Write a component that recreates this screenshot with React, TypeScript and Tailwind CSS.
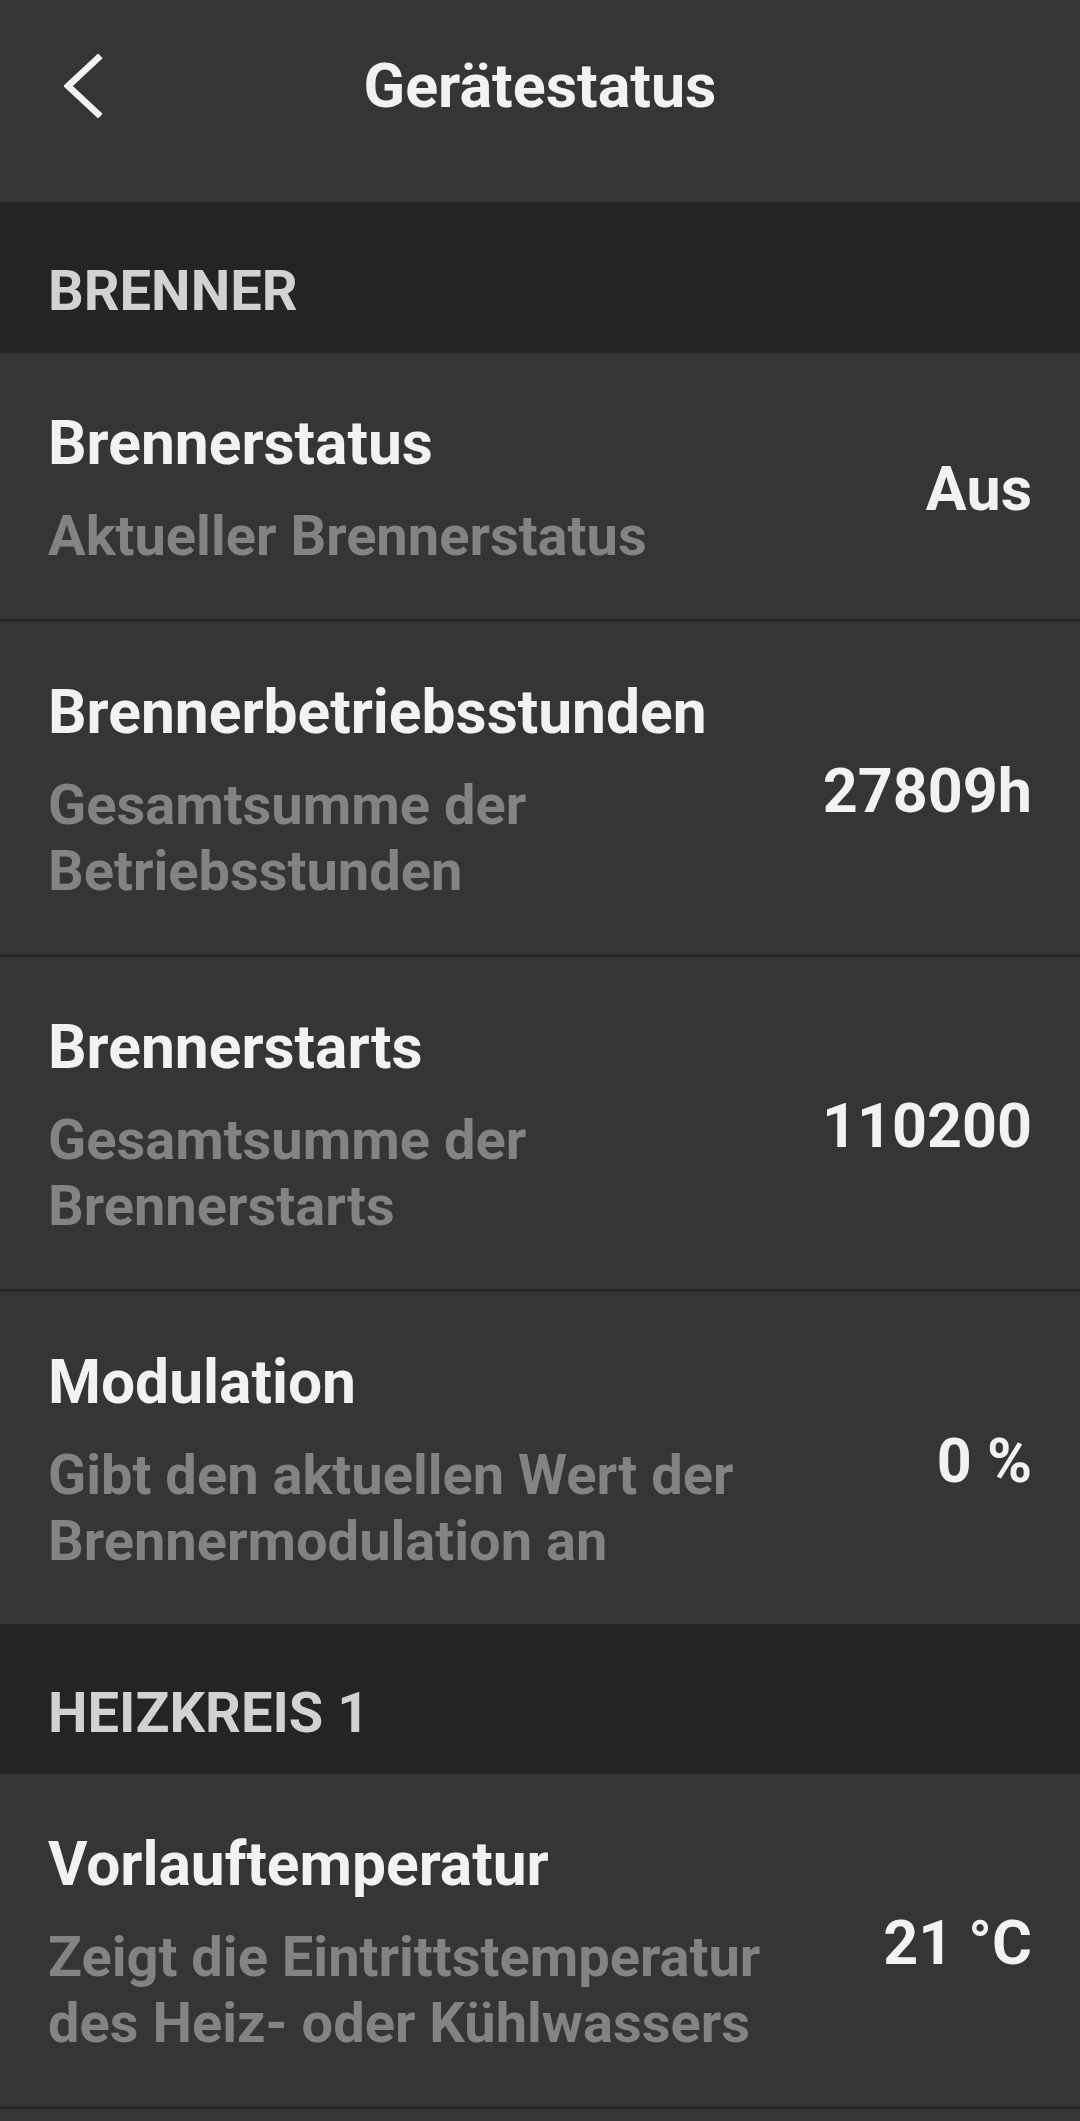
import React from "react";

type Row = { title: string; sub: string; value: string };

const brenner: Row[] = [
  { title: "Brennerstatus", sub: "Aktueller Brennerstatus", value: "Aus" },
  { title: "Brennerbetriebsstunden", sub: "Gesamtsumme der Betriebsstunden", value: "27809h" },
  { title: "Brennerstarts", sub: "Gesamtsumme der Brennerstarts", value: "110200" },
  { title: "Modulation", sub: "Gibt den aktuellen Wert der Brennermodulation an", value: "0 %" },
];

const heizkreis: Row[] = [
  {
    title: "Vorlauftemperatur",
    sub: "Zeigt die Eintrittstemperatur des Heiz- oder Kühlwassers",
    value: "21 °C",
  },
];

function SectionHeader({ label, h }: { label: string; h: "a" | "b" }) {
  return (
    <div className={(h === "a" ? "h-[151px]" : "h-[150px]") + " bg-[#242424] pl-[48px] pt-[57px]"}>
      <div className="text-[56px] leading-[64px] font-bold text-[#d2d2d2]">{label}</div>
    </div>
  );
}

function ItemRow({ row, divider }: { row: Row; divider: boolean }) {
  return (
    <div
      className={
        "flex items-center gap-[60px] bg-[#353535] pl-[48px] pr-[48px] pt-[56px] pb-[50px] " +
        (divider ? "border-t-[3px] border-[#262626]" : "")
      }
    >
      <div className="flex min-w-0 flex-1 flex-col">
        <div className="text-[60.5px] leading-[70px] font-bold text-[#f2f2f2]">{row.title}</div>
        <div className="mt-[24px] text-[56px] leading-[66px] font-bold text-[#838383]">{row.sub}</div>
      </div>
      <div className="shrink-0 text-[61px] leading-[70px] font-bold text-[#f2f2f2]">{row.value}</div>
    </div>
  );
}

export default function App() {
  return (
    <div
      className="w-[1080px] bg-[#353535]"
      style={{ fontFamily: "Roboto, 'Noto Sans', sans-serif" }}
    >
      <div className="h-[202px] bg-[#353535]">
        <div className="grid h-[172px] grid-cols-[1fr_auto_1fr] items-center">
          <div className="pl-[64px]">
            <svg width="40" height="64" viewBox="0 0 40 64" fill="none">
              <polyline
                points="34,4 4,32 34,60"
                stroke="#f2f2f2"
                strokeWidth="6.5"
                strokeLinecap="square"
                strokeLinejoin="miter"
              />
            </svg>
          </div>
          <div className="text-[61px] leading-[70px] font-bold text-[#f2f2f2]">Gerätestatus</div>
          <div />
        </div>
      </div>

      <SectionHeader label="BRENNER" h="a" />
      {brenner.map((r, i) => (
        <ItemRow key={r.title} row={r} divider={i > 0} />
      ))}

      <SectionHeader label="HEIZKREIS 1" h="b" />
      {heizkreis.map((r) => (
        <ItemRow key={r.title} row={r} divider={false} />
      ))}
      <div className="h-[3px] bg-[#262626]" />
      <div className="h-[12px] bg-[#353535]" />
    </div>
  );
}
